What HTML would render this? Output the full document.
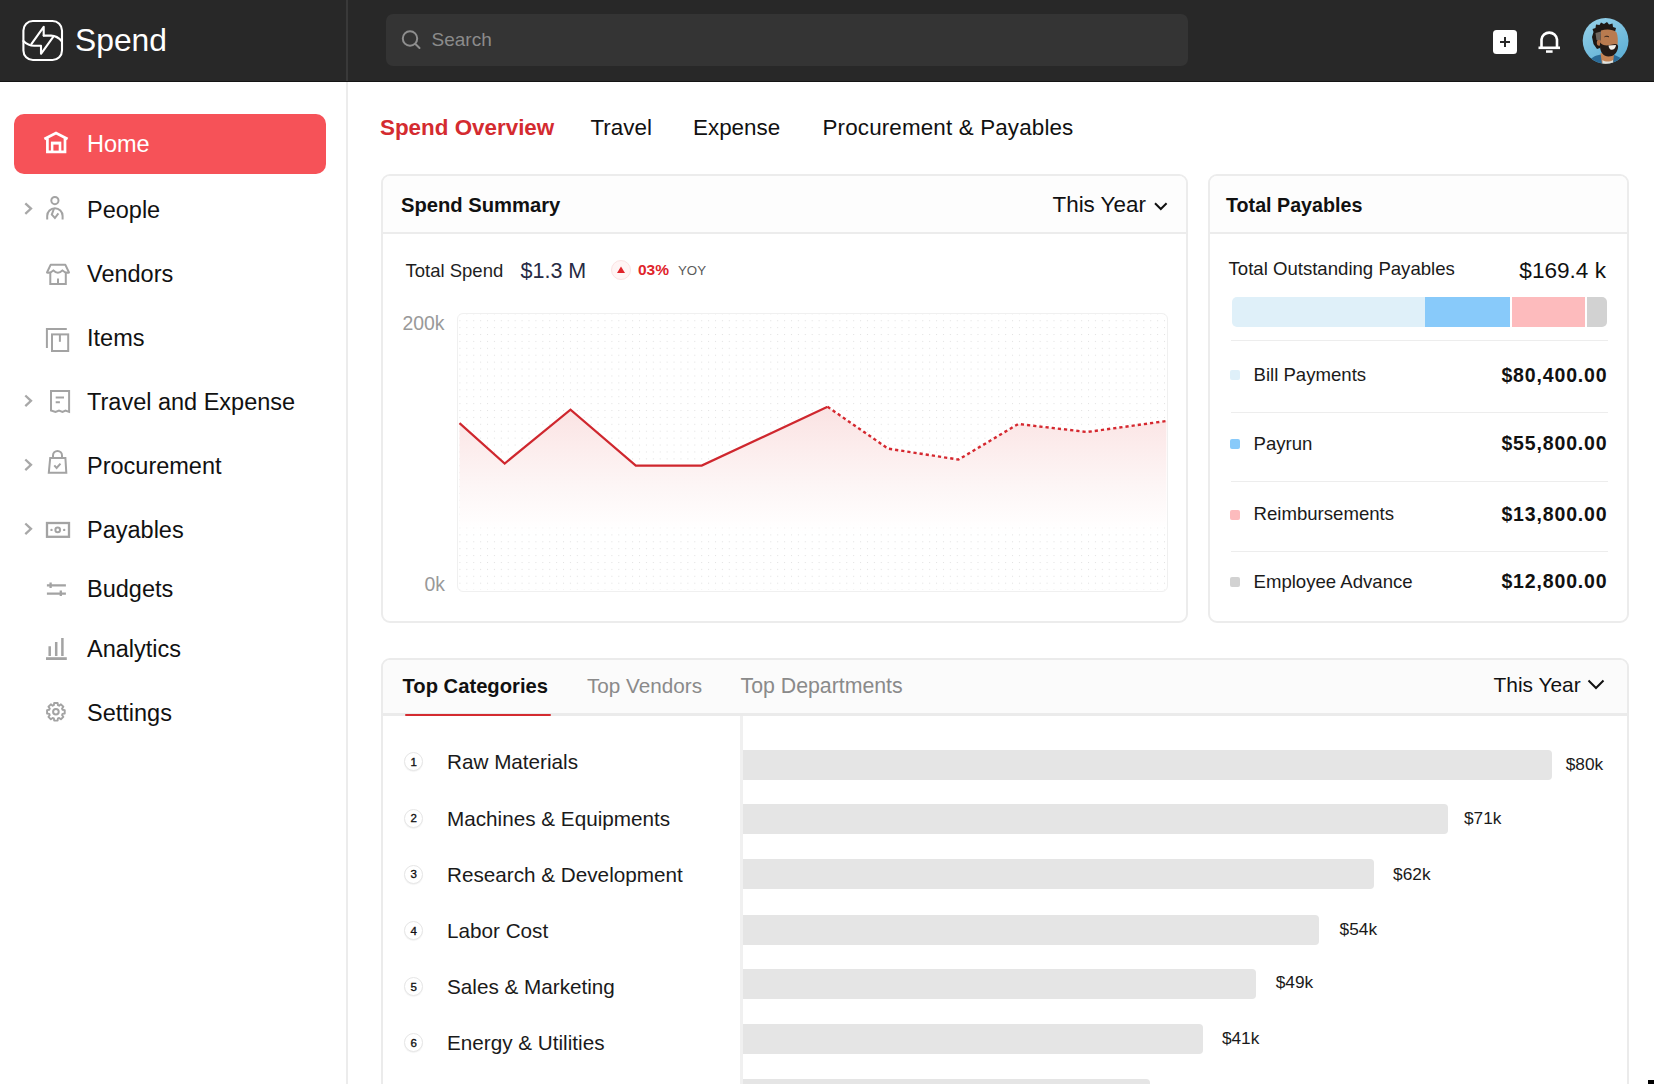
<!DOCTYPE html>
<html><head><meta charset="utf-8"><style>
html,body{margin:0;padding:0;width:1654px;height:1084px;overflow:hidden;background:#fff;font-family:"Liberation Sans", sans-serif;}
.t{position:absolute;line-height:0;white-space:nowrap;}
</style></head><body>
<div style="position:absolute;left:0px;top:0px;width:1654px;height:81px;background:#282828;"></div>
<div style="position:absolute;left:0px;top:81px;width:1654px;height:1px;background:#141414;"></div>
<div style="position:absolute;left:346px;top:0px;width:2px;height:81px;background:#393939;"></div>
<svg style="position:absolute;left:0;top:0" width="80" height="80" viewBox="0 0 80 80" fill="none" stroke="#fff" stroke-width="2.1" stroke-linejoin="round" stroke-linecap="round">
<rect x="23.4" y="21" width="38.6" height="39" rx="9.5"/>
<path d="M23.4 41 C27 44.6 30.5 45.8 34 45.8 L41 45.8 L41 53.8 L53.2 36.8"/>
<path d="M43.7 35.6 L43.7 26.8 L31.5 43.8"/>
<path d="M43.7 35.6 L51 35.6 C55.5 35.6 59 37.8 62 41.5"/>
</svg>
<div class="t" style="left:75.00px;top:39.58px;font-size:31.8px;color:#fff;">Spend</div>
<div style="position:absolute;left:386px;top:14px;width:802px;height:52px;background:#343434;border-radius:7px;"></div>
<svg style="position:absolute;left:396px;top:26px" width="30" height="30" viewBox="396 26 30 30" fill="none" stroke="#8e8e8e" stroke-width="2" stroke-linecap="round">
<circle cx="410" cy="38.5" r="7.2"/><path d="M415.2 43.7 L419.5 48"/></svg>
<div class="t" style="left:431.50px;top:40.42px;font-size:19px;color:#8b8b8b;">Search</div>
<div style="position:absolute;left:1493px;top:30px;width:23.6px;height:23.6px;background:#fff;border-radius:3.5px;"></div>
<div style="position:absolute;left:1499.9px;top:41px;width:10px;height:1.8px;background:#282828;"></div>
<div style="position:absolute;left:1504px;top:36.9px;width:1.8px;height:9.8px;background:#282828;"></div>
<svg style="position:absolute;left:1530px;top:24px" width="40" height="36" viewBox="1530 24 40 36" fill="none" stroke="#fff" stroke-width="2.6">
<path d="M1541.5 47 L1541.5 39.5 A7.8 7.8 0 0 1 1557 39.5 L1557 47"/>
<path d="M1538.5 47.8 L1560 47.8"/>
<rect x="1546" y="50.3" width="6.6" height="2.5" fill="#fff" stroke="none"/>
</svg>
<svg style="position:absolute;left:1582px;top:17px" width="47" height="47" viewBox="0 0 47 47">
<defs><clipPath id="av"><circle cx="23.6" cy="23.8" r="22.9"/></clipPath>
<linearGradient id="avbg" x1="0" y1="0" x2="0.6" y2="1"><stop offset="0" stop-color="#9ad3ea"/><stop offset="1" stop-color="#5fb0d6"/></linearGradient></defs>
<g clip-path="url(#av)">
<rect width="47" height="47" fill="url(#avbg)"/>
<path d="M4 47 C8 41 13 38.5 19 37.5 L30 37.5 C36 38.5 41 42 44 47 Z" fill="#2a6b98"/>
<path d="M18.5 36 L20 47 L31 47 L32 37 Z" fill="#c48455"/>
<path d="M20.5 43 C23 45 28 45 31 43 L31 47 L20.5 47 Z" fill="#dde3e2"/>
<path d="M10 20 L11.5 15 L10.5 12 L13.5 11 L14 7.5 L17.5 8 L19 5.5 L22 7 L25 5 L27 7.5 L30.5 6.5 L31 10 L34 11 L33 15 L30 14 L22 14.5 L19 22 L18 31 L15 32 L11.5 27 Z" fill="#1e1815"/>
<path d="M13.5 16 L19 14.5 L18.5 24 L14.5 23 Z" fill="#6e6660"/>
<path d="M19 13.5 C24 12 31 12 34.5 15.5 C36 19 36 24 35.5 28 C34 33 31 36 27.5 36.5 C23 36.5 19.5 33 18.5 28 Z" fill="#b97b4f"/>
<ellipse cx="17" cy="25.8" rx="2.2" ry="3" fill="#b07149"/>
<path d="M18 25.5 C19.5 27.5 22 28.5 25 28.5 L33 27 C35.5 27 36.5 28.5 36 31 C35 36 31.5 39.5 26.5 39.5 C21.5 39.5 18.5 35.5 18 30 Z" fill="#231b17"/>
<path d="M26.5 28.6 L34 28 C33.8 31 32 32.8 29.5 32.8 C27.8 32.8 26.8 31 26.5 28.6 Z" fill="#f5f1ea"/>
<path d="M22.5 19.8 C24 19 26 19 27 20" stroke="#2a1d17" stroke-width="1" fill="none"/>
</g></svg>
<div style="position:absolute;left:346px;top:82px;width:2px;height:1002px;background:#ececec;"></div>
<div style="position:absolute;left:14px;top:114px;width:312px;height:59.5px;background:#f65258;border-radius:10px;"></div>
<svg style="position:absolute;left:0;top:82px" width="80" height="680" viewBox="0 82 80 680" fill="none" stroke-linecap="butt" stroke-linejoin="miter">
<g stroke="#fff" stroke-width="2.7">
<path d="M44.4 139 L56 133 L67.6 139"/>
<path d="M47.4 138.3 L47.4 151.9 L65 151.9 L65 138.3"/>
</g>
<rect x="50.9" y="141.6" width="10.4" height="11.2" fill="#fff"/>
<rect x="53.4" y="144.6" width="5.3" height="6" fill="#f65258"/>
<g stroke="#a8a8a8" stroke-width="2.3">
<path d="M25.3 203.3 L31 208.6 L25.3 213.9"/>
<path d="M25.3 395.5 L31 400.8 L25.3 406.1"/>
<path d="M25.3 459.5 L31 464.8 L25.3 470.1"/>
<path d="M25.3 523.5 L31 528.8 L25.3 534.1"/>
</g>
<g stroke="#a3a3a3" stroke-width="2">
<circle cx="54.9" cy="200.6" r="3.6"/>
<path d="M47.2 219.5 L47.2 216 A7.7 7.7 0 0 1 62.6 216 L62.6 219.5"/>
<path d="M54 208.5 L51.8 214.6 L54.9 218 L58.4 213.4"/>
<path d="M47 272.5 L50.6 264.8 L65.4 264.8 L69 272.5 Q65.6 273.6 62.4 270.4 Q57.9 275.3 53.4 270.4 Q50.3 273.6 47 272.5 Z" stroke-linejoin="round"/>
<path d="M50.3 272 L50.3 284 L65.8 284 L65.8 272"/>
<path d="M58 278.5 L58 284"/>
<path d="M46.9 348 L46.9 329 L66.8 329"/>
<rect x="52" y="334.4" width="16.2" height="16.6"/>
<path d="M59.9 334.4 L59.9 341.8"/>
<path d="M51 390.9 L69.1 390.9 L69.1 411.9 L65.5 410.5 L62.5 411.9 L59 410.5 L55.5 411.9 L51 410.5 Z"/>
<path d="M55.7 397.5 L64 397.5 M55.7 402.2 L59.9 402.2"/>
<path d="M53 458 L53 455.5 A4.5 4.5 0 0 1 62 455.5 L62 458"/>
<path d="M50.2 458 L65.4 458 L66.3 472.8 L48.8 472.8 Z"/>
<path d="M54.3 465.4 L56.6 468 L60.5 463.6"/>
<rect x="47" y="523" width="22" height="13.8" stroke-width="2.3"/>
<circle cx="57.7" cy="529.9" r="2.3"/>
<path d="M46.9 585.3 L65.9 585.3 M46.9 593.6 L65.9 593.6 M50.6 582.5 L50.6 588 M60.8 590.5 L60.8 596" stroke-width="2.3"/>
<path d="M49.7 656 L49.7 646.2 M56.2 656 L56.2 642 M62.4 656 L62.4 638" stroke-width="2.5"/>
<path d="M46 658.6 L66.8 658.6" stroke-width="2.8"/>
<circle cx="55.9" cy="711.8" r="2.8"/>
</g>
<g fill="#a3a3a3"><circle cx="51.5" cy="529.9" r="1.2"/><circle cx="64.2" cy="529.9" r="1.2"/></g>
<path d="M62.27 709.16 L62.50 709.78 L64.73 710.08 L64.73 713.52 L62.50 713.82 L62.27 714.44 L61.99 715.04 L63.36 716.83 L60.93 719.26 L59.14 717.89 L58.54 718.17 L57.92 718.40 L57.62 720.63 L54.18 720.63 L53.88 718.40 L53.26 718.17 L52.66 717.89 L50.87 719.26 L48.44 716.83 L49.81 715.04 L49.53 714.44 L49.30 713.82 L47.07 713.52 L47.07 710.08 L49.30 709.78 L49.53 709.16 L49.81 708.56 L48.44 706.77 L50.87 704.34 L52.66 705.71 L53.26 705.43 L53.88 705.20 L54.18 702.97 L57.62 702.97 L57.92 705.20 L58.54 705.43 L59.14 705.71 L60.93 704.34 L63.36 706.77 L61.99 708.56 Z" stroke="#a3a3a3" stroke-width="1.9" stroke-linejoin="round"/>
</svg>
<div class="t" style="left:87.00px;top:144.36px;font-size:23.5px;color:#fff;">Home</div>
<div class="t" style="left:87.00px;top:209.86px;font-size:23.5px;color:#111;">People</div>
<div class="t" style="left:87.00px;top:274.16px;font-size:23.5px;color:#111;">Vendors</div>
<div class="t" style="left:87.00px;top:338.16px;font-size:23.5px;color:#111;">Items</div>
<div class="t" style="left:87.00px;top:402.16px;font-size:23.5px;color:#111;">Travel and Expense</div>
<div class="t" style="left:87.00px;top:466.16px;font-size:23.5px;color:#111;">Procurement</div>
<div class="t" style="left:87.00px;top:530.46px;font-size:23.5px;color:#111;">Payables</div>
<div class="t" style="left:87.00px;top:589.06px;font-size:23.5px;color:#111;">Budgets</div>
<div class="t" style="left:87.00px;top:649.06px;font-size:23.5px;color:#111;">Analytics</div>
<div class="t" style="left:87.00px;top:713.36px;font-size:23.5px;color:#111;">Settings</div>
<div class="t" style="left:380.00px;top:127.94px;font-size:22.4px;color:#d42b30;font-weight:700;">Spend Overview</div>
<div class="t" style="left:590.50px;top:127.94px;font-size:22.4px;color:#111;">Travel</div>
<div class="t" style="left:693.00px;top:127.94px;font-size:22.4px;color:#111;">Expense</div>
<div class="t" style="left:822.50px;top:127.94px;font-size:22.4px;color:#111;letter-spacing:0.15px;">Procurement &amp; Payables</div>
<div style="position:absolute;left:380.5px;top:174px;width:807px;height:449px;background:#fff;box-sizing:border-box;border:2px solid #ececec;border-radius:9px;"></div>
<div style="position:absolute;left:382.5px;top:176px;width:803px;height:56px;background:#fdfdfd;border-radius:7px 7px 0 0;"></div>
<div style="position:absolute;left:382.5px;top:232px;width:803px;height:2px;background:#ececec;"></div>
<div class="t" style="left:401.00px;top:204.50px;font-size:20.2px;color:#111;font-weight:700;">Spend Summary</div>
<div class="t" style="left:1052.50px;top:205.24px;font-size:22.4px;color:#111;">This Year</div>
<svg style="position:absolute;left:1150px;top:198px" width="22" height="16" viewBox="1150 198 22 16" fill="none" stroke="#111" stroke-width="2"><path d="M1155 203.2 L1160.8 209 L1166.6 203.2"/></svg>
<div class="t" style="left:405.50px;top:270.59px;font-size:18.5px;color:#1e1e1e;">Total Spend</div>
<div class="t" style="left:520.50px;top:271.15px;font-size:21.5px;color:#272a43;">$1.3 M</div>
<div style="position:absolute;left:611px;top:260px;width:20px;height:20px;border-radius:50%;background:#fff5f5;box-sizing:border-box;border:1px solid #fbe3e3"></div>
<svg style="position:absolute;left:611px;top:260px" width="20" height="20" viewBox="0 0 20 20"><path d="M10 6.4 L14 13 L6 13 Z" fill="#e0242b"/></svg>
<div class="t" style="left:638.00px;top:269.83px;font-size:15.5px;color:#e0242b;font-weight:700;">03%</div>
<div class="t" style="left:678.00px;top:270.59px;font-size:13.3px;color:#5a5a5a;">YOY</div>
<div class="t" style="left:402.50px;top:323.28px;font-size:19.4px;color:#999;">200k</div>
<div class="t" style="left:424.50px;top:583.78px;font-size:19.4px;color:#999;">0k</div>
<div style="position:absolute;left:457px;top:313px;width:711px;height:279px;background:#fff;box-sizing:border-box;border:1px solid #f0f0f0;border-radius:6px;"></div>
<svg style="position:absolute;left:0;top:0" width="1654" height="700" viewBox="0 0 1654 700">
<defs>
<pattern id="dots" x="466.3" y="320.2" width="6.908" height="6.908" patternUnits="userSpaceOnUse"><rect x="0" y="0" width="1.05" height="1.05" fill="#e2e2e2"/></pattern>
<linearGradient id="ar" x1="0" y1="405" x2="0" y2="522" gradientUnits="userSpaceOnUse"><stop offset="0" stop-color="#fae2e2"/><stop offset="0.35" stop-color="#fcecec"/><stop offset="0.7" stop-color="#fdf6f6"/><stop offset="1" stop-color="#fffdfd"/></linearGradient>
<linearGradient id="fadeb" x1="0" y1="521" x2="0" y2="536" gradientUnits="userSpaceOnUse"><stop offset="0" stop-color="#fffdfd" stop-opacity="1"/><stop offset="1" stop-color="#ffffff" stop-opacity="0"/></linearGradient></defs>
<rect x="459" y="314" width="708" height="276" fill="url(#dots)"/>
<path d="M459.5,423.1 L504.7,463.5 L570.5,409.6 L635.8,465.6 L701.7,465.6 L827.6,406.8 L888.0,448.6 L958.5,459.6 L1018.2,424.0 L1087.2,432.0 L1166.4,421.0 L1166.4,522 L459.5,522 Z" fill="url(#ar)"/>
<rect x="459" y="521" width="707.4" height="15" fill="url(#fadeb)"/>
<polyline points="459.5,423.1 504.7,463.5 570.5,409.6 635.8,465.6 701.7,465.6 827.6,406.8" fill="none" stroke="#cf272e" stroke-width="2.2" stroke-linejoin="miter"/>
<polyline points="827.6,406.8 888.0,448.6 958.5,459.6 1018.2,424.0 1087.2,432.0 1166.4,421.0" fill="none" stroke="#d5282f" stroke-width="2.4" stroke-dasharray="3.2 3"/>
</svg>
<div style="position:absolute;left:1208.3px;top:174px;width:420.4px;height:449px;background:#fff;box-sizing:border-box;border:2px solid #ececec;border-radius:9px;"></div>
<div style="position:absolute;left:1210.3px;top:176px;width:416.4px;height:56px;background:#fdfdfd;border-radius:7px 7px 0 0;"></div>
<div style="position:absolute;left:1210.3px;top:232px;width:416.4px;height:2px;background:#ececec;"></div>
<div class="t" style="left:1226.00px;top:204.77px;font-size:19.7px;color:#111;font-weight:700;">Total Payables</div>
<div class="t" style="left:1228.50px;top:269.26px;font-size:18.6px;color:#1a1a1a;">Total Outstanding Payables</div>
<div class="t" style="right:48.00px;top:270.57px;font-size:22.6px;color:#111;">$169.4 k</div>
<div style="position:absolute;left:1231.5px;top:297px;width:375.5px;height:29.5px;border-radius:5px;overflow:hidden;background:#fff"><div style="position:absolute;left:0;top:0;width:193px;height:29.5px;background:#dff0f9"></div><div style="position:absolute;left:193px;top:0;width:85.7px;height:29.5px;background:#88cafa"></div><div style="position:absolute;left:280.5px;top:0;width:72.5px;height:29.5px;background:#fdbbbd"></div><div style="position:absolute;left:355.5px;top:0;width:20px;height:29.5px;background:#d2d2d2"></div></div>
<div style="position:absolute;left:1231px;top:340px;width:377px;height:1px;background:#ededed;"></div>
<div style="position:absolute;left:1231px;top:411.5px;width:377px;height:1px;background:#ededed;"></div>
<div style="position:absolute;left:1231px;top:481px;width:377px;height:1px;background:#ededed;"></div>
<div style="position:absolute;left:1231px;top:551px;width:377px;height:1px;background:#ededed;"></div>
<div style="position:absolute;left:1230px;top:370.4px;width:10px;height:10px;background:#dff0f9;border-radius:2px;"></div>
<div class="t" style="left:1253.50px;top:374.96px;font-size:18.6px;color:#1a1a1a;">Bill Payments</div>
<div class="t" style="right:46.50px;top:374.64px;font-size:19.5px;color:#111;font-weight:700;letter-spacing:0.85px;">$80,400.00</div>
<div style="position:absolute;left:1230px;top:439px;width:10px;height:10px;background:#88cafa;border-radius:2px;"></div>
<div class="t" style="left:1253.50px;top:443.56px;font-size:18.6px;color:#1a1a1a;">Payrun</div>
<div class="t" style="right:46.50px;top:443.24px;font-size:19.5px;color:#111;font-weight:700;letter-spacing:0.85px;">$55,800.00</div>
<div style="position:absolute;left:1230px;top:509.79999999999995px;width:10px;height:10px;background:#fdbbbd;border-radius:2px;"></div>
<div class="t" style="left:1253.50px;top:514.36px;font-size:18.6px;color:#1a1a1a;">Reimbursements</div>
<div class="t" style="right:46.50px;top:514.04px;font-size:19.5px;color:#111;font-weight:700;letter-spacing:0.85px;">$13,800.00</div>
<div style="position:absolute;left:1230px;top:577px;width:10px;height:10px;background:#d2d2d2;border-radius:2px;"></div>
<div class="t" style="left:1253.50px;top:581.56px;font-size:18.6px;color:#1a1a1a;">Employee Advance</div>
<div class="t" style="right:46.50px;top:581.24px;font-size:19.5px;color:#111;font-weight:700;letter-spacing:0.85px;">$12,800.00</div>
<div style="position:absolute;left:380.5px;top:658px;width:1248.5px;height:440px;background:#fff;box-sizing:border-box;border:2px solid #ebebeb;border-radius:9px;"></div>
<div style="position:absolute;left:382.5px;top:660px;width:1244.5px;height:53px;background:#fbfbfb;border-radius:7px 7px 0 0;"></div>
<div style="position:absolute;left:382.5px;top:713px;width:1244.5px;height:2.6px;background:#ebebeb;"></div>
<div style="position:absolute;left:404.5px;top:713.5px;width:146.5px;height:2.5px;background:#d42b30;border-radius:2px;"></div>
<div class="t" style="left:402.50px;top:686.30px;font-size:20.2px;color:#111;font-weight:700;">Top Categories</div>
<div class="t" style="left:587.00px;top:686.13px;font-size:20.7px;color:#8a8a8a;">Top Vendors</div>
<div class="t" style="left:740.50px;top:685.92px;font-size:21.3px;color:#8a8a8a;">Top Departments</div>
<div class="t" style="left:1493.50px;top:685.36px;font-size:20.9px;color:#111;">This Year</div>
<svg style="position:absolute;left:1584px;top:676px" width="24" height="18" viewBox="1584 676 24 18" fill="none" stroke="#111" stroke-width="2"><path d="M1588.5 680.5 L1596 688 L1603.5 680.5"/></svg>
<div style="position:absolute;left:740px;top:715.6px;width:3px;height:380px;background:#f0f0f0;"></div>
<div style="position:absolute;left:404.3px;top:752.40px;width:19px;height:19px;box-sizing:border-box;border:1px solid #e6e6e6;border-radius:50%;background:#fff;box-shadow:0 1px 1px rgba(0,0,0,0.05)"></div>
<div class="t" style="left:409.80px;top:761.92px;font-size:11.5px;color:#111;width:8px;text-align:center;-webkit-text-stroke:0.35px #111;">1</div>
<div class="t" style="left:447.00px;top:762.33px;font-size:20.7px;color:#1a1a1a;">Raw Materials</div>
<div style="position:absolute;left:404.3px;top:808.60px;width:19px;height:19px;box-sizing:border-box;border:1px solid #e6e6e6;border-radius:50%;background:#fff;box-shadow:0 1px 1px rgba(0,0,0,0.05)"></div>
<div class="t" style="left:409.80px;top:818.12px;font-size:11.5px;color:#111;width:8px;text-align:center;-webkit-text-stroke:0.35px #111;">2</div>
<div class="t" style="left:447.00px;top:818.53px;font-size:20.7px;color:#1a1a1a;">Machines &amp; Equipments</div>
<div style="position:absolute;left:404.3px;top:864.80px;width:19px;height:19px;box-sizing:border-box;border:1px solid #e6e6e6;border-radius:50%;background:#fff;box-shadow:0 1px 1px rgba(0,0,0,0.05)"></div>
<div class="t" style="left:409.80px;top:874.32px;font-size:11.5px;color:#111;width:8px;text-align:center;-webkit-text-stroke:0.35px #111;">3</div>
<div class="t" style="left:447.00px;top:874.73px;font-size:20.7px;color:#1a1a1a;">Research &amp; Development</div>
<div style="position:absolute;left:404.3px;top:921.00px;width:19px;height:19px;box-sizing:border-box;border:1px solid #e6e6e6;border-radius:50%;background:#fff;box-shadow:0 1px 1px rgba(0,0,0,0.05)"></div>
<div class="t" style="left:409.80px;top:930.52px;font-size:11.5px;color:#111;width:8px;text-align:center;-webkit-text-stroke:0.35px #111;">4</div>
<div class="t" style="left:447.00px;top:930.93px;font-size:20.7px;color:#1a1a1a;">Labor Cost</div>
<div style="position:absolute;left:404.3px;top:977.20px;width:19px;height:19px;box-sizing:border-box;border:1px solid #e6e6e6;border-radius:50%;background:#fff;box-shadow:0 1px 1px rgba(0,0,0,0.05)"></div>
<div class="t" style="left:409.80px;top:986.72px;font-size:11.5px;color:#111;width:8px;text-align:center;-webkit-text-stroke:0.35px #111;">5</div>
<div class="t" style="left:447.00px;top:987.13px;font-size:20.7px;color:#1a1a1a;">Sales &amp; Marketing</div>
<div style="position:absolute;left:404.3px;top:1033.40px;width:19px;height:19px;box-sizing:border-box;border:1px solid #e6e6e6;border-radius:50%;background:#fff;box-shadow:0 1px 1px rgba(0,0,0,0.05)"></div>
<div class="t" style="left:409.80px;top:1042.92px;font-size:11.5px;color:#111;width:8px;text-align:center;-webkit-text-stroke:0.35px #111;">6</div>
<div class="t" style="left:447.00px;top:1043.33px;font-size:20.7px;color:#1a1a1a;">Energy &amp; Utilities</div>
<div style="position:absolute;left:743px;top:749.8px;width:808.8px;height:30px;background:#e5e5e5;border-radius:0 4px 4px 0;"></div>
<div class="t" style="left:1565.70px;top:764.11px;font-size:17.3px;color:#1a1a1a;">$80k</div>
<div style="position:absolute;left:743px;top:804.3px;width:705.2px;height:30px;background:#e5e5e5;border-radius:0 4px 4px 0;"></div>
<div class="t" style="left:1464.00px;top:818.41px;font-size:17.3px;color:#1a1a1a;">$71k</div>
<div style="position:absolute;left:743px;top:859.2px;width:630.8px;height:30px;background:#e5e5e5;border-radius:0 4px 4px 0;"></div>
<div class="t" style="left:1393.10px;top:874.01px;font-size:17.3px;color:#1a1a1a;">$62k</div>
<div style="position:absolute;left:743px;top:914.6px;width:575.9000000000001px;height:30px;background:#e5e5e5;border-radius:0 4px 4px 0;"></div>
<div class="t" style="left:1339.60px;top:929.31px;font-size:17.3px;color:#1a1a1a;">$54k</div>
<div style="position:absolute;left:743px;top:968.6px;width:512.5px;height:30px;background:#e5e5e5;border-radius:0 4px 4px 0;"></div>
<div class="t" style="left:1275.70px;top:981.71px;font-size:17.3px;color:#1a1a1a;">$49k</div>
<div style="position:absolute;left:743px;top:1023.5px;width:459.70000000000005px;height:30px;background:#e5e5e5;border-radius:0 4px 4px 0;"></div>
<div class="t" style="left:1221.90px;top:1037.51px;font-size:17.3px;color:#1a1a1a;">$41k</div>
<div style="position:absolute;left:743px;top:1078.9px;width:406.70000000000005px;height:30px;background:#e5e5e5;border-radius:0 4px 4px 0;"></div>
<div style="position:absolute;left:1648px;top:1080px;width:6px;height:4px;background:#000;"></div>
</body></html>
